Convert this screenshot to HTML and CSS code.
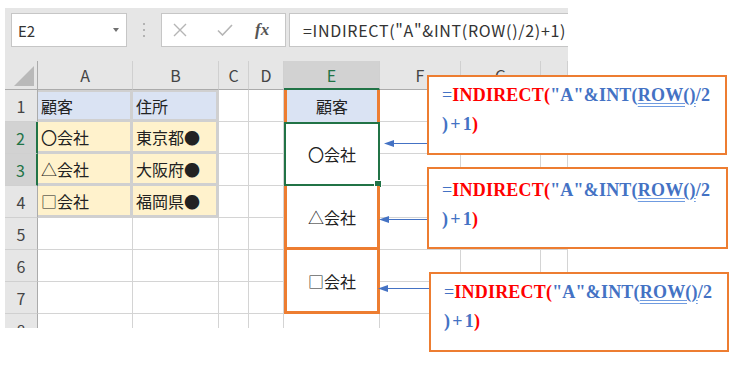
FILE: index.html
```html
<!DOCTYPE html>
<html lang="ja">
<head>
  <meta charset="UTF-8" />
  <title>INDIRECT ROW</title>
  <link rel="stylesheet" href="styles.css">
</head>
<body>
  <div class="excel">
    <!-- Formula bar -->
    <div class="formula-bar">
      <div class="name-box"><span>E2</span><span class="drop"></span></div>
      <div class="grip"></div>
      <div class="fx-buttons">
        <svg class="btn-x" width="14" height="14" viewBox="0 0 14 14"><path d="M1 1 L13 13 M13 1 L1 13" stroke="#b5b5b5" stroke-width="1.4" fill="none"/></svg>
        <svg class="btn-ok" width="16" height="12" viewBox="0 0 16 12"><path d="M1 6.5 L5.5 11 L15 1" stroke="#b5b5b5" stroke-width="1.6" fill="none"/></svg>
        <span class="fx">fx</span>
      </div>
      <div class="formula-input">=INDIRECT("A"&amp;INT(ROW()/2)+1)</div>
    </div>

    <!-- Sheet -->
    <div class="sheet">
      <div class="corner"><svg width="20" height="20" viewBox="0 0 20 20"><polygon points="20,0 20,20 0,20" fill="#b9b9b9"/></svg></div>
      <div class="col-head">A</div>
      <div class="col-head">B</div>
      <div class="col-head">C</div>
      <div class="col-head">D</div>
      <div class="col-head active">E</div>
      <div class="col-head">F</div>
      <div class="col-head">G</div>
      <div class="col-head"></div>

      <div class="row-head">1</div>
      <div class="cell tbl top blue">顧客</div>
      <div class="cell tbl top blue">住所</div>
      <div class="cell"></div>
      <div class="cell"></div>
      <div class="cell e1">顧客</div>
      <div class="cell"></div>
      <div class="cell"></div>
      <div class="cell"></div>

      <div class="row-head active">2</div>
      <div class="cell tbl yellow">〇会社</div>
      <div class="cell tbl yellow">東京都●</div>
      <div class="cell"></div>
      <div class="cell"></div>
      <div class="cell e-merge e2">〇会社<span class="handle"></span></div>
      <div class="cell"></div>
      <div class="cell"></div>
      <div class="cell"></div>

      <div class="row-head active">3</div>
      <div class="cell tbl yellow">△会社</div>
      <div class="cell tbl yellow">大阪府●</div>
      <div class="cell"></div>
      <div class="cell"></div>
      <div class="cell"></div>
      <div class="cell"></div>
      <div class="cell"></div>

      <div class="row-head">4</div>
      <div class="cell tbl yellow">□会社</div>
      <div class="cell tbl yellow">福岡県●</div>
      <div class="cell"></div>
      <div class="cell"></div>
      <div class="cell e-merge e4">△会社</div>
      <div class="cell"></div>
      <div class="cell"></div>
      <div class="cell"></div>

      <div class="row-head">5</div>
      <div class="cell"></div>
      <div class="cell"></div>
      <div class="cell"></div>
      <div class="cell"></div>
      <div class="cell"></div>
      <div class="cell"></div>
      <div class="cell"></div>

      <div class="row-head">6</div>
      <div class="cell"></div>
      <div class="cell"></div>
      <div class="cell"></div>
      <div class="cell"></div>
      <div class="cell e-merge e6">□会社</div>
      <div class="cell"></div>
      <div class="cell"></div>
      <div class="cell"></div>

      <div class="row-head">7</div>
      <div class="cell"></div>
      <div class="cell"></div>
      <div class="cell"></div>
      <div class="cell"></div>
      <div class="cell"></div>
      <div class="cell"></div>
      <div class="cell"></div>

      <div class="row-head">8</div>
      <div class="cell"></div>
      <div class="cell"></div>
      <div class="cell"></div>
      <div class="cell"></div>
      <div class="cell"></div>
      <div class="cell"></div>
      <div class="cell"></div>
      <div class="cell"></div>
    </div>
  </div>

  <!-- Arrows from callouts to the merged cells -->
  <svg class="arrows" width="738" height="365" viewBox="0 0 738 365">
    <line x1="428" y1="143.5" x2="392" y2="143.5" />
    <polygon points="384,143.5 394,140 394,147" />
    <line x1="428" y1="219.5" x2="387" y2="219.5" />
    <polygon points="379,219.5 389,216 389,223" />
    <line x1="430" y1="288.5" x2="386" y2="288.5" />
    <polygon points="378,288.5 388,285 388,292" />
  </svg>

  <!-- Callouts -->
  <div class="callout c1">
    <span class="eq">=</span><span class="fn">INDIRECT(</span>"A"&amp;INT(<span class="dbl">ROW()</span>/2<br>)<span class="plus">+</span>1<span class="fn">)</span>
  </div>
  <div class="callout c2">
    <span class="eq">=</span><span class="fn">INDIRECT(</span>"A"&amp;INT(<span class="dbl">ROW()</span>/2<br>)<span class="plus">+</span>1<span class="fn">)</span>
  </div>
  <div class="callout c3">
    <span class="eq">=</span><span class="fn">INDIRECT(</span>"A"&amp;INT(<span class="dbl">ROW()</span>/2<br>)<span class="plus">+</span>1<span class="fn">)</span>
  </div>
</body>
</html>
```

FILE: styles.css
```css
/* Page */
body {
  margin: 0;
  width: 738px;
  height: 365px;
  background: #fff;
  color: #333;
  font-family: "Noto Sans CJK JP", "Noto Sans", sans-serif;
  position: relative;
  overflow: hidden;
}
.excel {
  margin: 8px 0 0 5px;
  width: 563px;
  height: 320px;
  background: #e6e6e6;
  overflow: hidden;
}

/* Formula bar */
.formula-bar {
  display: flex;
  align-items: center;
  height: 53px;
  padding: 5px 0 14px 6px;
  box-sizing: border-box;
}
.name-box {
  width: 116px;
  height: 34px;
  box-sizing: border-box;
  background: #fff;
  border: 1px solid #c6c6c6;
  display: flex;
  align-items: center;
  justify-content: space-between;
  padding: 0 7px 0 6px;
  font-size: 15px;
  color: #333;
}
.drop {
  width: 0;
  height: 0;
  border-left: 3px solid transparent;
  border-right: 3px solid transparent;
  border-top: 4px solid #707070;
}
.grip {
  margin-left: 16px;
  width: 2px;
  height: 14px;
  background: repeating-linear-gradient(to bottom, #b3b3b3 0 2px, transparent 2px 6px);
}
.fx-buttons {
  margin-left: 16px;
  width: 125px;
  height: 34px;
  box-sizing: border-box;
  background: #fff;
  border: 1px solid #c6c6c6;
  display: flex;
  align-items: center;
  padding-left: 11px;
}
.btn-x { margin-right: 30px; }
.btn-ok { margin-right: 22px; }
.fx {
  font-family: "Liberation Serif", serif;
  font-style: italic;
  font-weight: bold;
  font-size: 17px;
  color: #555;
}
.formula-input {
  margin-left: 3px;
  flex: 1;
  height: 34px;
  box-sizing: border-box;
  background: #fff;
  border: 1px solid #c6c6c6;
  border-right: none;
  padding-left: 13px;
  display: flex;
  align-items: center;
  font-size: 16px;
  letter-spacing: 0.7px;
  color: #333;
  white-space: nowrap;
}

/* Sheet grid */
.sheet {
  display: grid;
  grid-template-columns: 33px 95px 86px 30px 35px 96px 81px 80px 27px;
  grid-template-rows: 29px repeat(8, 32px);
  background: #fff;
  font-size: 16px;
}
.sheet > div {
  box-sizing: border-box;
  display: flex;
  align-items: center;
}
.corner {
  background: #e6e6e6;
  border-right: 1px solid #ababab;
  border-bottom: 1px solid #ababab;
  justify-content: flex-end;
  align-items: flex-end !important;
  padding: 0 3px 3px 0;
}
.col-head {
  background: #e6e6e6;
  border-right: 1px solid #d0d0d0;
  border-bottom: 1px solid #ababab;
  justify-content: center;
  color: #444;
}
.col-head.active {
  background: #d2d2d2;
  color: #217346;
  border-bottom: 2px solid #217346;
}
.row-head {
  background: #e6e6e6;
  border-right: 1px solid #ababab;
  border-bottom: 1px solid #d0d0d0;
  justify-content: center;
  color: #444;
}
.row-head.active {
  background: #d2d2d2;
  color: #217346;
  border-right: 2px solid #217346;
}
.cell {
  border-right: 1px solid #d4d4d4;
  border-bottom: 1px solid #d4d4d4;
  padding-left: 3px;
  color: #222;
  white-space: nowrap;
}

/* Source table A1:B4 */
.tbl {
  border-right: 3px solid #d0d0d0;
  border-bottom: 3px solid #d0d0d0;
}
.tbl.top { border-top: 2px solid #d0d0d0; }
.blue { background: #dae3f3; }
.yellow { background: #fff2cc; }

/* Result column E */
.e1 {
  background: #dae3f3;
  justify-content: center;
  padding-left: 0;
  border-left: 3px solid #ed7d31;
  border-right: 3px solid #ed7d31;
  border-bottom: none;
}
.e-merge {
  grid-column: 6;
  justify-content: center;
  padding-left: 0;
  position: relative;
  background: #fff;
}
.e2 {
  grid-row: 3 / span 2;
  border: 2px solid #217346;
}
.e4 {
  grid-row: 5 / span 2;
  border: 3px solid #ed7d31;
  border-top: none;
}
.e6 {
  grid-row: 7 / span 2;
  border: 3px solid #ed7d31;
  border-top: none;
}
.handle {
  position: absolute;
  right: -4px;
  bottom: -4px;
  width: 6px;
  height: 6px;
  background: #217346;
  border: 1px solid #fff;
}

/* Overlay: arrows and callouts */
.arrows {
  position: absolute;
  left: 0;
  top: 0;
}
.arrows line {
  stroke: #4472c4;
  stroke-width: 1;
}
.arrows polygon {
  fill: #4472c4;
}
.callout {
  position: absolute;
  box-sizing: border-box;
  border: 2px solid #ed7d31;
  background: #fff;
  padding: 4px 13px;
  font-family: "Liberation Serif", serif;
  font-weight: bold;
  font-size: 18px;
  line-height: 29px;
  letter-spacing: 0.2px;
  color: #4472c4;
  white-space: nowrap;
}
.c1 { left: 427px; top: 75px; width: 300px; height: 80px; }
.c2 { left: 427px; top: 167px; width: 301px; height: 82px; padding-top: 7px; }
.c3 { left: 429px; top: 272px; width: 300px; height: 80px; }
.eq { font-weight: normal; }
.fn { color: #ff0000; }
.plus { margin: 0 2px; }
.dbl {
  text-decoration: underline double #6f9be0;
  text-underline-offset: 2px;
}
```
